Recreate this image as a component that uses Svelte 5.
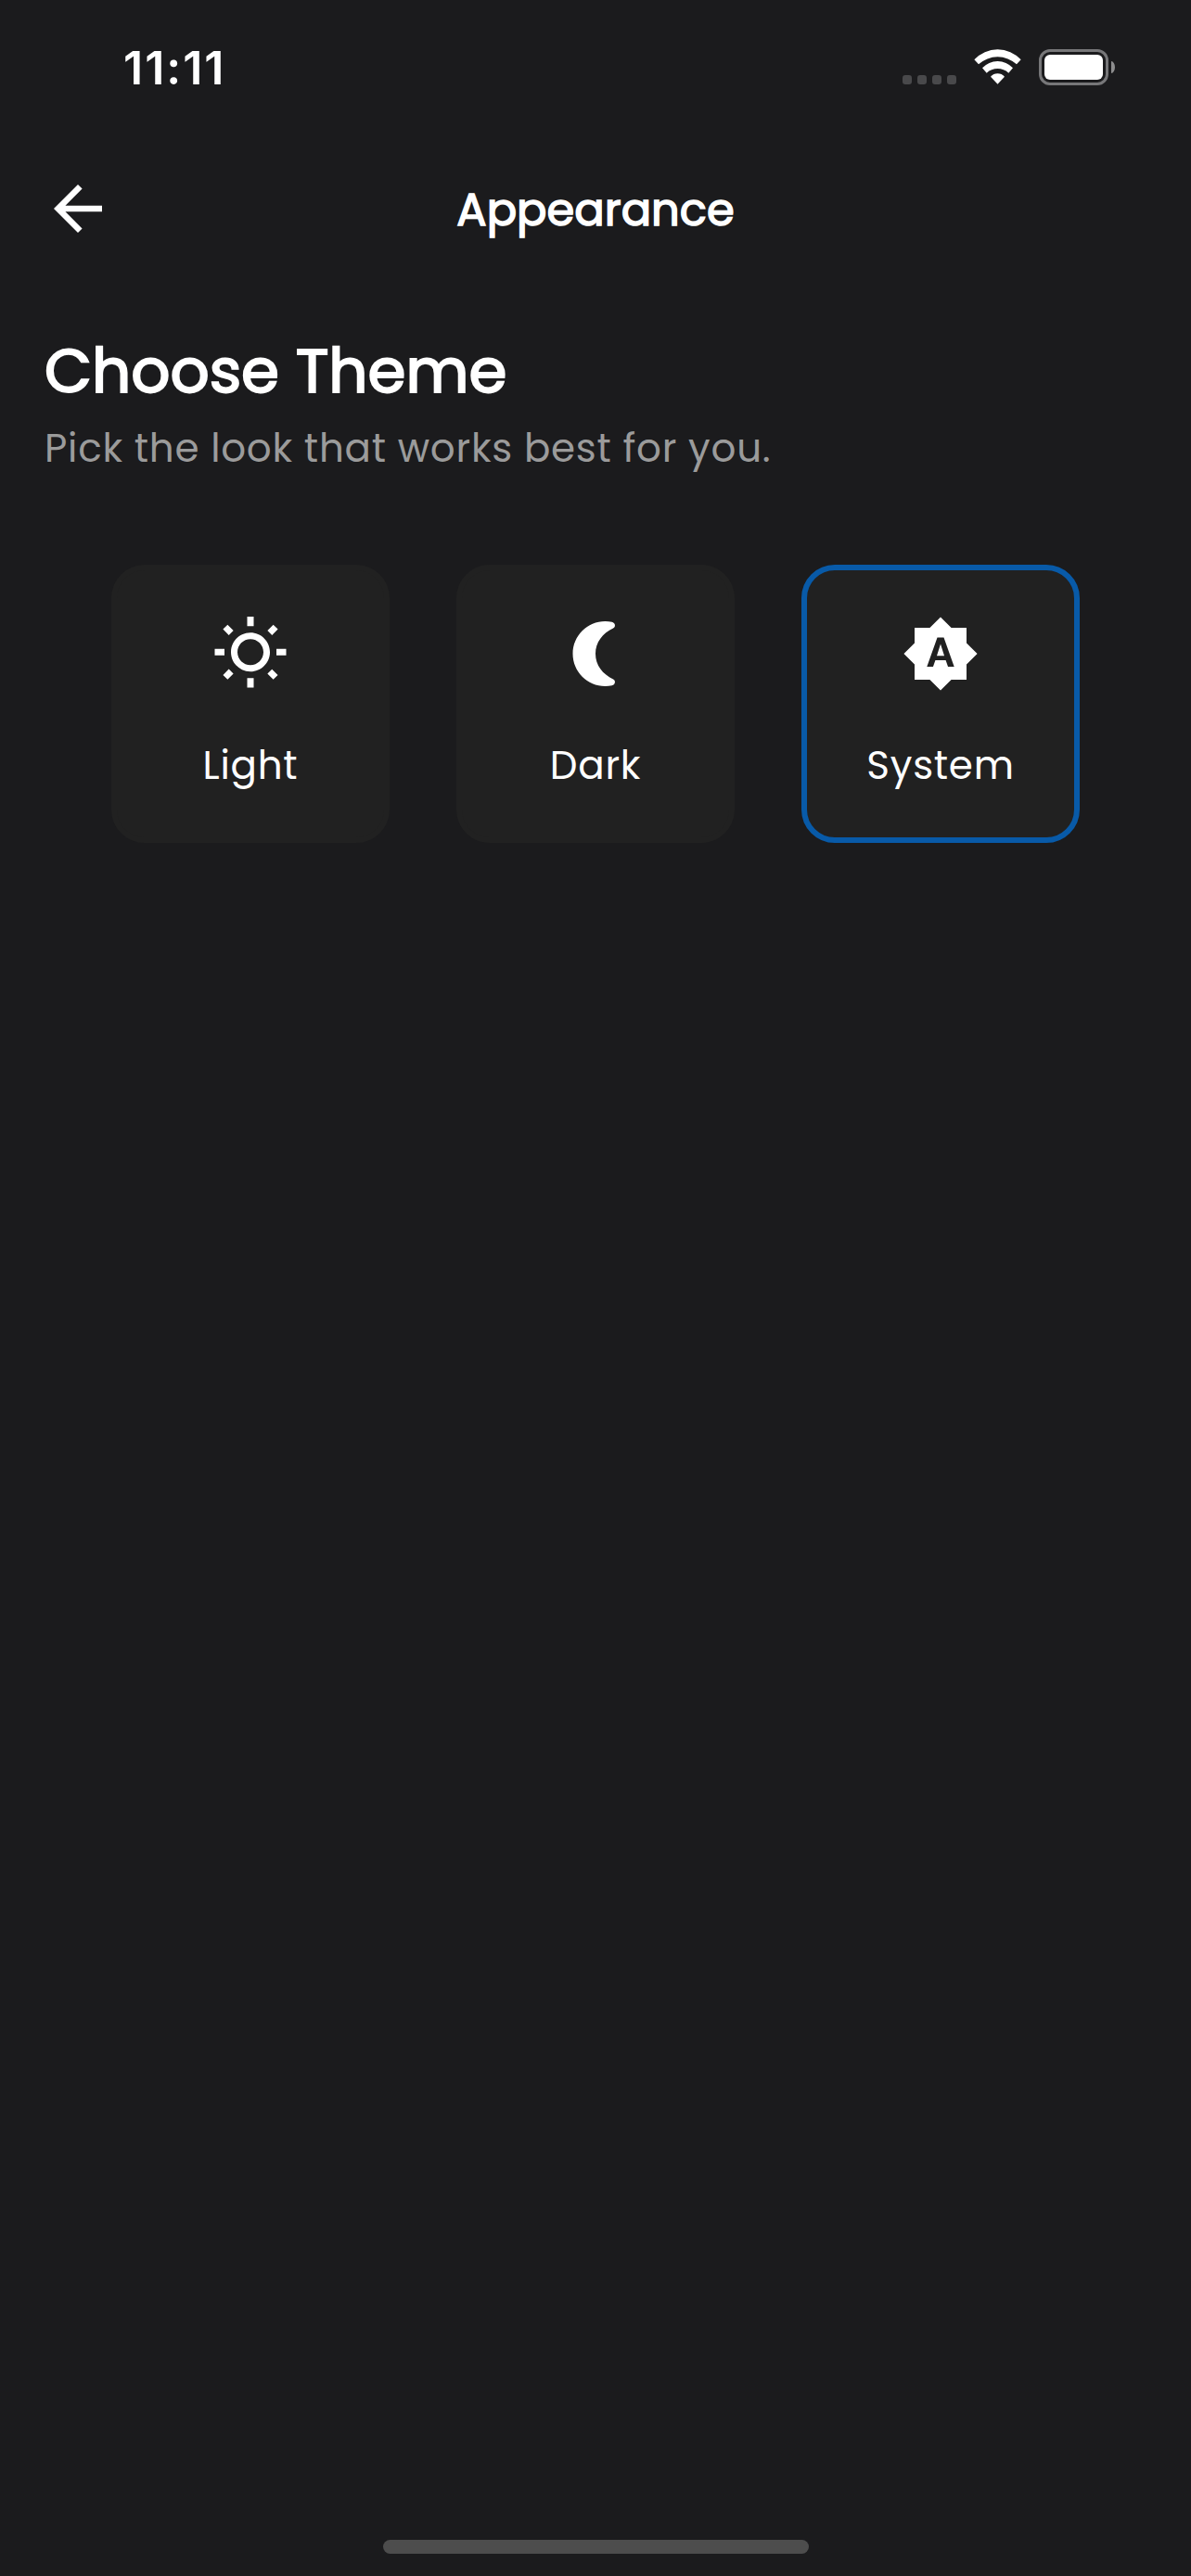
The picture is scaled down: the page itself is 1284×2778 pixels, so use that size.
<script>
  const themes = [
    {
      id: 'light',
      label: 'Light',
      icon: 'm6.76 4.84-1.8-1.79-1.41 1.41 1.79 1.79 1.42-1.41zM4 10.5H1v2h3v-2zm9-9.95h-2V3.5h2V.55zm7.45 3.91-1.41-1.41-1.79 1.79 1.41 1.41 1.79-1.79zm-3.21 13.7 1.79 1.8 1.41-1.41-1.8-1.79-1.4 1.4zM20 10.5v2h3v-2h-3zm-8-5c-3.31 0-6 2.69-6 6s2.69 6 6 6 6-2.69 6-6-2.69-6-6-6zm0 10c-2.21 0-4-1.79-4-4s1.79-4 4-4 4 1.79 4 4-1.79 4-4 4zm-1 6.95h2V19.5h-2v2.95zm-7.45-3.91 1.41 1.41 1.79-1.8-1.41-1.41-1.79 1.8z'
    },
    {
      id: 'dark',
      label: 'Dark',
      icon: 'M15 22c.7 0 1.37-.06 2.05-.2 1.03-.22 1.3-1.5.4-1.95C14.2 18.3 12 15.5 12 12s2.2-6.3 5.45-7.85c.9-.45.63-1.73-.4-1.95C16.37 2.06 15.7 2 15 2 9.48 2 5 6.48 5 12s4.48 10 10 10z'
    },
    {
      id: 'system',
      label: 'System',
      icon: 'M10.85 12.65h2.3L12 9l-1.15 3.65zM20 8.69V4h-4.69L12 .69 8.69 4H4v4.69L.69 12 4 15.31V20h4.69L12 23.31 15.31 20H20v-4.69L23.31 12 20 8.69zM14.3 16l-.7-2h-3.2l-.7 2H7.8L11 7h2l3.2 9h-1.9z'
    }
  ];
  let selected = $state('system');
</script>

<div class="screen">
  <div class="status">
    <span class="time">11:11</span>
    <div class="indicators">
      <div class="dots"><i></i><i></i><i></i><i></i></div>
      <svg class="wifi" viewBox="330 70 153 115">
        <path d="M331 104A103 103 0 0 1 482 104L468 119A91 91 0 0 0 345 119Z" />
        <path d="M357 131A67 67 0 0 1 456 131L442 147A52 52 0 0 0 371 147Z" />
        <path d="M384 159A30 30 0 0 1 429 159L406.500 183Z" />
      </svg>
      <div class="battery"><div class="level"></div></div>
      <div class="tip"></div>
    </div>
  </div>

  <header>
    <button class="back" aria-label="Back">
      <svg viewBox="0 0 24 24"><path d="M20 11H7.830l5.590-5.590L12 4l-8 8 8 8 1.410-1.410L7.830 13H20v-2z" /></svg>
    </button>
    <h1>Appearance</h1>
  </header>

  <main>
    <h2>Choose Theme</h2>
    <p>Pick the look that works best for you.</p>
    <div class="cards">
      {#each themes as theme}
        <button class="card {theme.id}" class:selected={selected === theme.id} onclick={() => (selected = theme.id)}>
          <svg viewBox="0 0 24 24"><path d={theme.icon} /></svg>
          <span>{theme.label}</span>
        </button>
      {/each}
    </div>
  </main>

  <div class="home"></div>
</div>

<style>
  :global(body) {
    background: #1b1b1d;
  }
  .screen {
    display: flex;
    flex-direction: column;
    width: 1284px;
    height: 2778px;
    background: #1b1b1d;
    color: #fff;
    font-family: Poppins, Inter, sans-serif;
    white-space: nowrap;
  }
  svg {
    display: block;
    fill: #fff;
  }
  button {
    border: 0;
    padding: 0;
    background: none;
    color: inherit;
    font: inherit;
  }
  .status {
    display: flex;
    justify-content: space-between;
    align-items: center;
    box-sizing: border-box;
    height: 145px;
    padding: 0 82px 0 133px;
  }
  .time {
    font: 600 50px/60px Inter, sans-serif;
    letter-spacing: 2px;
  }
  .indicators {
    display: flex;
    align-items: center;
  }
  .dots {
    display: flex;
    gap: 6px;
    margin: 27px 19px 0 0;
  }
  .dots i {
    width: 10px;
    height: 10px;
    border-radius: 3px;
    background: #49494b;
  }
  .wifi {
    width: 51px;
    height: 38.300px;
    margin-right: 19px;
  }
  .battery {
    box-sizing: border-box;
    width: 75px;
    height: 39px;
    padding: 3px;
    border: 3px solid #777779;
    border-radius: 12px;
  }
  .level {
    height: 27px;
    border-radius: 6px;
    background: #fff;
  }
  .tip {
    width: 4px;
    height: 13px;
    margin-left: 3px;
    border-radius: 0 4px 4px 0 / 0 6.500px 6.500px 0;
    background: #8d8d8e;
  }
  header {
    display: grid;
    grid-template-columns: 78px 1fr 78px;
    align-items: center;
    height: 160px;
    padding: 0 45px;
  }
  .back svg {
    width: 78px;
    height: 78px;
  }
  h1,
  h2,
  p {
    margin: 0;
  }
  h1 {
    padding-top: 3px;
    text-align: center;
    font-size: 48px;
    font-weight: 400;
    line-height: 61px;
    -webkit-text-stroke: 1.500px #fff;
  }
  main {
    flex: 1;
    padding: 55px 48px 0;
  }
  h2 {
    font-size: 66px;
    font-weight: 400;
    line-height: 80px;
    -webkit-text-stroke: 2px #fff;
  }
  p {
    margin-top: 13px;
    color: #9b9b9b;
    font-size: 42px;
    font-weight: 400;
    line-height: 61px;
    letter-spacing: 0.750px;
  }
  .cards {
    display: flex;
    justify-content: center;
    gap: 72px;
    margin-top: 95px;
  }
  .card {
    display: flex;
    flex-direction: column;
    align-items: center;
    gap: 48px;
    box-sizing: border-box;
    width: 300px;
    height: 300px;
    padding-top: 48px;
    border: 6px solid #212121;
    border-radius: 36px;
    background: #212121;
  }
  .card.selected {
    border-color: #085aa8;
  }
  .card svg {
    width: 84px;
    height: 84px;
  }
  .card span {
    font-size: 42px;
    font-weight: 400;
    line-height: 61px;
    letter-spacing: 0.750px;
  }
  .home {
    align-self: center;
    width: 459px;
    height: 15px;
    margin-bottom: 24px;
    border-radius: 8px;
    background: #4d4d4d;
  }
</style>
